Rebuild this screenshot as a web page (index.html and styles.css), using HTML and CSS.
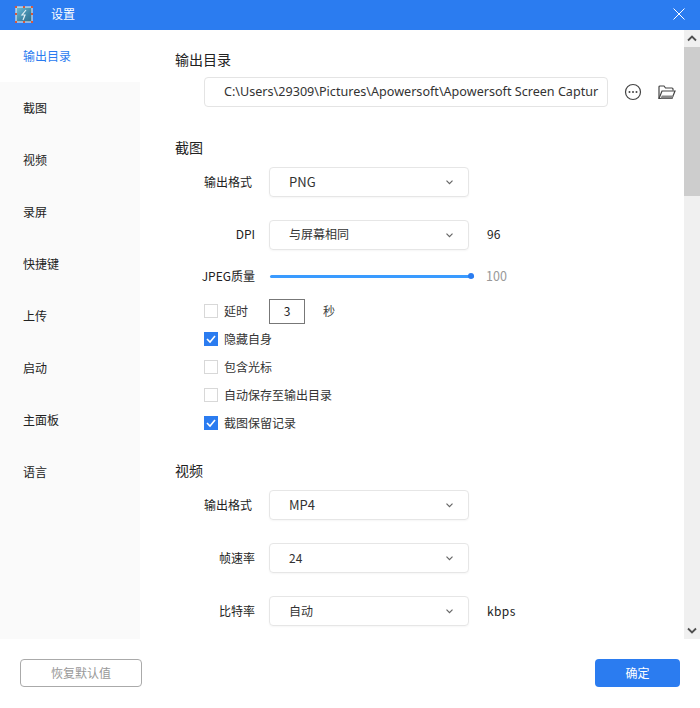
FILE: index.html
```html
<!DOCTYPE html>
<html lang="zh-CN">
<head>
<meta charset="utf-8">
<title>设置</title>
<link rel="stylesheet" href="styles.css">
</head>
<body>
<div class="window">
  <header class="titlebar">
    <svg class="app-icon" width="18" height="17" viewBox="0 0 18 17">
      <defs><linearGradient id="g" x1="0" y1="0" x2="1" y2="1"><stop offset="0" stop-color="#6fc0dc"/><stop offset=".6" stop-color="#3f86a6"/><stop offset="1" stop-color="#2f6f8f"/></linearGradient></defs>
      <rect x="1" y="1" width="16" height="15" fill="url(#g)"/>
      <path d="M1 1h16v15H1z" fill="none" stroke="#f3f3f3" stroke-width="1"/>
      <path d="M11 4L7 9h3l-2 5" fill="none" stroke="#dfeef5" stroke-width="1.2"/>
      <g fill="#d9583c"><rect x="0" y="0" width="2" height="2"/><rect x="8" y="0" width="2" height="2"/><rect x="16" y="0" width="2" height="2"/><rect x="0" y="7" width="2" height="2"/><rect x="16" y="7" width="2" height="2"/><rect x="0" y="15" width="2" height="2"/><rect x="8" y="15" width="2" height="2"/><rect x="16" y="15" width="2" height="2"/></g>
    </svg>
    <span class="title-text">设置</span>
    <svg class="close-icon" width="12" height="12" viewBox="0 0 12 12"><path d="M.5.5l11 11M11.5.5l-11 11" stroke="#fff" stroke-width="1" fill="none"/></svg>
  </header>
  <div class="main">
    <nav class="sidebar">
      <div class="nav-item active">输出目录</div>
      <div class="nav-item">截图</div>
      <div class="nav-item">视频</div>
      <div class="nav-item">录屏</div>
      <div class="nav-item">快捷键</div>
      <div class="nav-item">上传</div>
      <div class="nav-item">启动</div>
      <div class="nav-item">主面板</div>
      <div class="nav-item">语言</div>
    </nav>
    <div class="content">
      <h2 class="section-title first">输出目录</h2>
      <div class="path-row">
        <div class="path-box">C:\Users\29309\Pictures\Apowersoft\Apowersoft Screen Captur</div>
        <svg class="more-icon" width="18" height="18" viewBox="0 0 18 18"><circle cx="9" cy="9" r="7.5" fill="none" stroke="#444" stroke-width="1.2"/><g fill="#444"><circle cx="5.5" cy="9" r="1"/><circle cx="9" cy="9" r="1"/><circle cx="12.5" cy="9" r="1"/></g></svg>
        <svg class="folder-icon" width="18" height="15" viewBox="0 0 18 15"><path d="M1 13.5V2a1 1 0 0 1 1-1h4l1.5 2H14a1 1 0 0 1 1 1v1.5" fill="none" stroke="#444" stroke-width="1.2"/><path d="M1 13.5L4 6h13l-3 7.5z" fill="#fff" stroke="#444" stroke-width="1.2"/><path d="M2.5 13.5L3.8 10.5h11.8L14 13.5z" fill="#888"/></svg>
      </div>

      <h2 class="section-title shot">截图</h2>
      <div class="field first-field">
        <label class="field-label narrow">输出格式</label>
        <div class="select"><span class="latin">PNG</span><svg class="chevron" width="7" height="5" viewBox="0 0 7 5"><path d="M.5.7l3 3 3-3" fill="none" stroke="#666" stroke-width="1.2"/></svg></div>
      </div>
      <div class="field next-field dpi-row">
        <label class="field-label">DPI</label>
        <div class="select"><span>与屏幕相同</span><svg class="chevron" width="7" height="5" viewBox="0 0 7 5"><path d="M.5.7l3 3 3-3" fill="none" stroke="#666" stroke-width="1.2"/></svg></div>
        <span class="suffix">96</span>
      </div>
      <div class="slider-row">
        <label class="field-label">JPEG质量</label>
        <div class="slider"><div class="slider-thumb"></div></div>
        <span class="slider-value">100</span>
      </div>
      <div class="check-row delay">
        <span class="checkbox"></span><span class="check-label">延时</span>
        <span class="num-box">3</span><span class="unit">秒</span>
      </div>
      <div class="check-row">
        <span class="checkbox checked"><svg width="14" height="14" viewBox="0 0 14 14"><path d="M3 7l3 3 5-6" fill="none" stroke="#fff" stroke-width="1.6"/></svg></span><span class="check-label">隐藏自身</span>
      </div>
      <div class="check-row">
        <span class="checkbox"></span><span class="check-label">包含光标</span>
      </div>
      <div class="check-row">
        <span class="checkbox"></span><span class="check-label">自动保存至输出目录</span>
      </div>
      <div class="check-row">
        <span class="checkbox checked"><svg width="14" height="14" viewBox="0 0 14 14"><path d="M3 7l3 3 5-6" fill="none" stroke="#fff" stroke-width="1.6"/></svg></span><span class="check-label">截图保留记录</span>
      </div>

      <h2 class="section-title video">视频</h2>
      <div class="field first-field video-first">
        <label class="field-label narrow">输出格式</label>
        <div class="select"><span class="latin">MP4</span><svg class="chevron" width="7" height="5" viewBox="0 0 7 5"><path d="M.5.7l3 3 3-3" fill="none" stroke="#666" stroke-width="1.2"/></svg></div>
      </div>
      <div class="field next-field">
        <label class="field-label">帧速率</label>
        <div class="select"><span>24</span><svg class="chevron" width="7" height="5" viewBox="0 0 7 5"><path d="M.5.7l3 3 3-3" fill="none" stroke="#666" stroke-width="1.2"/></svg></div>
      </div>
      <div class="field next-field">
        <label class="field-label">比特率</label>
        <div class="select"><span>自动</span><svg class="chevron" width="7" height="5" viewBox="0 0 7 5"><path d="M.5.7l3 3 3-3" fill="none" stroke="#666" stroke-width="1.2"/></svg></div>
        <span class="suffix kbps">kbps</span>
      </div>
    </div>
    <div class="scrollbar">
      <div class="scroll-btn"><svg width="10" height="7" viewBox="0 0 10 7"><path d="M1 5.5L5 1.5l4 4" fill="none" stroke="#505050" stroke-width="1.8"/></svg></div>
      <div class="scroll-thumb"></div>
      <div class="scroll-track"></div>
      <div class="scroll-btn"><svg width="10" height="7" viewBox="0 0 10 7"><path d="M1 1.5L5 5.5l4-4" fill="none" stroke="#505050" stroke-width="1.8"/></svg></div>
    </div>
  </div>
  <footer class="footer">
    <button class="btn-reset"><span class="btn-text">恢复默认值</span></button>
    <button class="btn-ok"><span class="btn-text">确定</span></button>
  </footer>
</div>
</body>
</html>
```

FILE: styles.css
```css
* { box-sizing: border-box; }
html, body { margin: 0; padding: 0; }
body {
  width: 700px;
  height: 708px;
  overflow: hidden;
  background: #fff;
  color: #222;
  font-family: "Noto Sans CJK SC", "Noto Sans", sans-serif;
  font-size: 12px;
}
.window { display: flex; flex-direction: column; height: 708px; }
.titlebar {
  flex: none;
  height: 30px;
  background: #2b7cf0;
  display: flex;
  align-items: center;
  padding: 0 15px 2px 15px;
  color: #fff;
}
.app-icon { flex: none; }
.title-text { margin-left: 18px; font-size: 12px; line-height: 17px; padding-bottom: 2px; }
.close-icon { margin-left: auto; }
.main { flex: none; height: 609px; display: flex; }
.sidebar { flex: none; width: 140px; background: #fafafa; }
.nav-item {
  height: 52px;
  padding: 17px 0 0 23px;
  font-size: 12px;
  line-height: 17px;
  color: #222;
}
.nav-item.active { background: #fff; color: #2b7cf0; }
.content { flex: 1; min-width: 0; padding-left: 35px; overflow: hidden; }
.section-title { margin: 0; font-size: 14px; font-weight: 400; line-height: 18px; color: #222; }
.section-title.first { margin-top: 20px; }
.section-title.shot { margin-top: 31px; }
.section-title.video { margin-top: 24px; }
.path-row { display: flex; align-items: center; margin-top: 9px; padding-left: 29px; }
.path-box {
  flex: none;
  width: 404px;
  height: 30px;
  border: 1px solid #e4e4e4;
  border-radius: 4px;
  padding: 0 0 0 19px;
  line-height: 28px;
  font-family: "Noto Sans", sans-serif;
  font-size: 12.6px;
  white-space: nowrap;
  overflow: hidden;
  color: #333;
}
.more-icon { flex: none; margin-left: 16px; }
.folder-icon { flex: none; margin-left: 16px; }
.field { display: flex; align-items: center; height: 30px; }
.first-field { margin-top: 11px; }
.next-field { margin-top: 23px; }
.field-label { flex: none; width: 80px; text-align: right; font-size: 12px; line-height: 17px; padding-bottom: 2px; color: #222; white-space: nowrap; }
.field-label.narrow { width: 77px; }
.field-label.narrow + .select { margin-left: 17px; }
.select {
  flex: none;
  width: 200px;
  height: 30px;
  margin-left: 14px;
  border: 1px solid #e6e6e6;
  border-radius: 4px;
  box-shadow: 0 1px 2px rgba(0,0,0,.04);
  display: flex;
  align-items: center;
  justify-content: space-between;
  padding: 0 15px 0 19px;
  font-size: 12px;
  line-height: 17px;
  color: #333;
}
.select span { padding-bottom: 2px; }
.select .latin { font-size: 13px; }
.dpi-row .field-label, .dpi-row .select span, .dpi-row .suffix { padding-bottom: 4px; }
.suffix { margin-left: 18px; font-size: 12px; line-height: 17px; padding-bottom: 2px; color: #222; }
.suffix.kbps { letter-spacing: .4px; }
.slider-row { display: flex; align-items: center; height: 20px; margin-top: 16px; }
.slider {
  flex: none;
  width: 204px;
  height: 3px;
  margin-left: 15px;
  background: #3a9bff;
  border-radius: 2px;
  display: flex;
  align-items: center;
  justify-content: flex-end;
}
.slider-thumb { width: 6px; height: 6px; border-radius: 50%; background: #2b7cf0; }
.slider-value { margin-left: 12px; font-size: 12.5px; line-height: 17px; padding-bottom: 2px; color: #999; }
.check-row { display: flex; align-items: center; height: 28px; padding-left: 29px; }
.check-row.delay { margin-top: 11px; }
.checkbox {
  flex: none;
  width: 14px;
  height: 14px;
  border: 1px solid #d8d8d8;
  background: #fff;
  display: block;
}
.checkbox.checked { border: 0; background: #2b7cf0; }
.checkbox svg { display: block; }
.check-label { margin-left: 6px; font-size: 12px; line-height: 17px; padding-bottom: 2px; color: #333; }
.num-box {
  flex: none;
  width: 36px;
  height: 25px;
  margin-left: 21px;
  border: 1px solid #777;
  text-align: center;
  line-height: 21px;
  font-size: 12px;
  color: #222;
}
.unit { margin-left: 18px; font-size: 12px; line-height: 17px; padding-bottom: 2px; color: #444; }
.scrollbar { flex: none; width: 16px; display: flex; flex-direction: column; background: #f0f0f0; }
.scroll-btn { flex: none; height: 17px; display: flex; align-items: center; justify-content: center; }
.scroll-thumb { flex: none; height: 149px; background: #cdcdcd; }
.scroll-track { flex: 1; }
.footer {
  flex: 1;
  display: flex;
  align-items: flex-start;
  justify-content: space-between;
  padding: 20px 20px 0;
}
.btn-text { display: block; padding-bottom: 2px; }
.btn-reset {
  width: 122px;
  height: 28px;
  border: 1px solid #aaa;
  border-radius: 4px;
  background: #fff;
  color: #999;
  font: 12px/17px "Noto Sans CJK SC", sans-serif;
  padding: 0;
}
.btn-ok {
  width: 85px;
  height: 28px;
  border: 0;
  border-radius: 4px;
  background: #2b7cf0;
  color: #fff;
  font: 12px/17px "Noto Sans CJK SC", sans-serif;
  padding: 0;
}
```
